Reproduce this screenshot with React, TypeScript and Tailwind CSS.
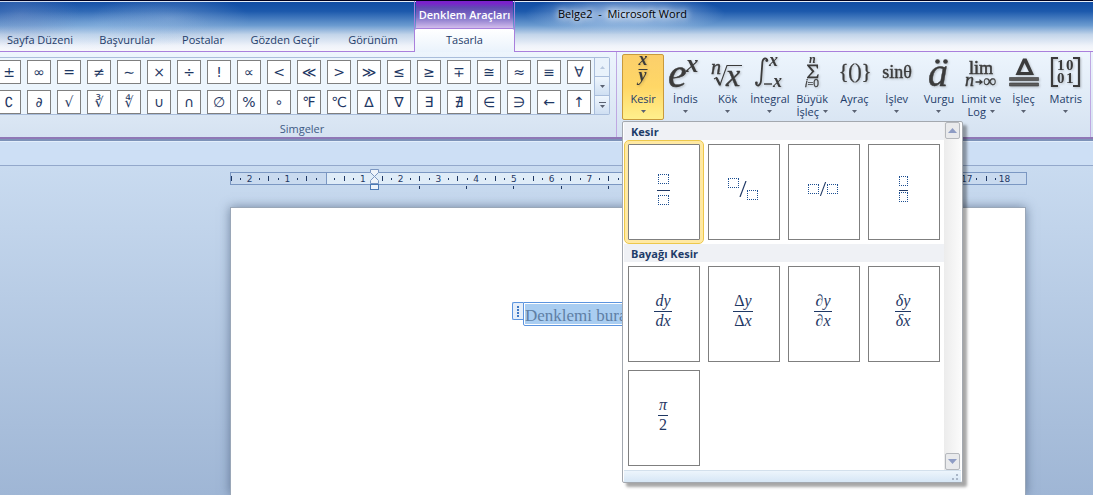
import type { ReactNode } from 'react';

const tabs = [
    { name: 'Sayfa Düzeni', width: 'w-20' },
    { name: 'Başvurular', width: 'w-[94px]' },
    { name: 'Postalar', width: 'w-[58px]' },
    { name: 'Gözden Geçir', width: 'w-[106px]' },
    { name: 'Görünüm', width: 'w-[70px]' },
];

const symbols = [
    ['±', '∞', '=', '≠', '∼', '×', '÷', '!', '∝', '<', '≪', '>', '≫', '≤', '≥', '∓', '≅', '≈', '≡', '∀'],
    ['∁', '∂', '√', '∛', '∜', '∪', '∩', '∅', '%', '∘', '℉', '℃', '∆', '∇', '∃', '∄', '∈', '∋', '←', '↑'],
];

const serif = 'Liberation Serif, DejaVu Serif, serif';

function Icon({ children }: { children: ReactNode }) {
    return (
        <svg viewBox="0 0 42 34" className="h-[34px] w-[42px] shrink-0 overflow-visible drop-shadow-[1px_1px_1px_rgba(0,0,0,0.2)]" fill="#3b3b3b" stroke="none" fontFamily={serif} aria-hidden="true">
            {children}
        </svg>
    );
}

const structures = [
    {
        label: ['İndis'],
        icon: (
            <Icon>
                <text x="4" y="32" fontSize="42" fontStyle="italic" stroke="#3b3b3b" strokeWidth="0.5">e</text>
                <text x="22" y="17" fontSize="25" fontStyle="italic" fontWeight="bold">x</text>
            </Icon>
        ),
    },
    {
        label: ['Kök'],
        icon: (
            <Icon>
                <text x="4" y="19" fontSize="20" fontStyle="italic" stroke="#3b3b3b" strokeWidth="0.4">n</text>
                <path d="M7 24l2.500-1.500L13 30l7-19.500h15" fill="none" stroke="#3b3b3b" strokeWidth="1.1" />
                <path d="M9.500 23l3.500 7" fill="none" stroke="#3b3b3b" strokeWidth="2.2" />
                <text x="19" y="31" fontSize="32" fontStyle="italic" stroke="#3b3b3b" strokeWidth="0.4">x</text>
            </Icon>
        ),
    },
    {
        label: ['İntegral'],
        icon: (
            <Icon>
                <path d="M18 5c0-2.500-4-2.500-4.600 2L12 26c-.5 5-4 5.500-5 3" fill="none" stroke="#3b3b3b" strokeWidth="1.8" />
                <circle cx="17.800" cy="5.500" r="1.400" />
                <circle cx="7.400" cy="28" r="1.400" />
                <text x="20" y="11" fontSize="18" fontStyle="italic" fontWeight="bold">x</text>
                <path d="M15 29h8" stroke="#3b3b3b" strokeWidth="1.400" />
                <text x="24" y="32" fontSize="18" fontStyle="italic" fontWeight="bold">x</text>
            </Icon>
        ),
    },
    {
        label: ['Büyük', 'İşleç'],
        icon: (
            <Icon>
                <text x="18" y="8" fontSize="12" fontStyle="italic" fontWeight="bold">n</text>
                <path d="M16 9.500h11v4h-1l-.8-2.300H19l4.500 5-5 5.300h7l1.200-2.300h1l-.6 4H16v-1l5-5.700-5-6z" />
                <text x="14" y="32" fontSize="10" fontFamily="Open Sans, sans-serif" stroke="#3b3b3b" strokeWidth="0.3"><tspan fontStyle="italic">i</tspan>=0</text>
            </Icon>
        ),
    },
    {
        label: ['Ayraç'],
        icon: (
            <Icon>
                <text x="22" y="23" fontSize="20" textAnchor="middle" stroke="#3b3b3b" strokeWidth="0.3">{'{()}'}</text>
            </Icon>
        ),
    },
    {
        label: ['İşlev'],
        icon: (
            <Icon>
                <text x="21" y="23" fontSize="18" textAnchor="middle" stroke="#3b3b3b" strokeWidth="0.4">sinθ</text>
            </Icon>
        ),
    },
    {
        label: ['Vurgu'],
        icon: (
            <Icon>
                <text x="10" y="31" fontSize="40" fontStyle="italic" stroke="#3b3b3b" strokeWidth="0.4">a</text>
                <circle cx="19.500" cy="6.500" r="2.300" />
                <circle cx="27.500" cy="6.500" r="2.300" />
            </Icon>
        ),
    },
    {
        label: ['Limit ve', 'Log'],
        icon: (
            <Icon>
                <text x="21" y="19" fontSize="18" textAnchor="middle" stroke="#3b3b3b" strokeWidth="0.5">lim</text>
                <text x="5" y="31" fontSize="18" fontStyle="italic" stroke="#3b3b3b" strokeWidth="0.4">n</text>
                <path d="M15.500 26.200h4v-2.200l3.500 3-3.500 3v-2.200h-4z" />
                <text x="23" y="32" fontSize="18" stroke="#3b3b3b" strokeWidth="0.3">∞</text>
            </Icon>
        ),
    },
    {
        label: ['İşleç'],
        icon: (
            <Icon>
                <path fillRule="evenodd" d="M20 3.500h3.500L31 20H12.500zM21.500 8l-4 9h8.500z" />
                <path d="M6.500 22.500h29v3h-29zM6.500 28h29v3h-29z" fill="#5c5c5c" stroke="#3b3b3b" strokeWidth="0.6" />
            </Icon>
        ),
    },
    {
        label: ['Matris'],
        icon: (
            <Icon>
                <path d="M13 3H7v28h6M28 3h6v28h-6" fill="none" stroke="#3b3b3b" strokeWidth="2.200" />
                <text x="12" y="15" fontSize="15" fontWeight="bold">1</text>
                <text x="21" y="15" fontSize="15" fontWeight="bold">0</text>
                <text x="12" y="28" fontSize="15" fontWeight="bold">0</text>
                <text x="21" y="28" fontSize="15" fontWeight="bold">1</text>
            </Icon>
        ),
    },
];

const commonFractions = [
    { prefix: 'd', upright: false },
    { prefix: 'Δ', upright: true },
    { prefix: '∂', upright: false },
    { prefix: 'δ', upright: false },
];

function Caret() {
    return (
        <svg viewBox="0 0 5 3" className="h-[3px] w-[5px] shrink-0" fill="#5a6272" aria-hidden="true">
            <path d="M0 0h5L2.500 3z" />
        </svg>
    );
}

function StructureButton({ label, icon }: { label: string[]; icon: ReactNode }) {
    return (
        <button className="flex h-[66px] w-full flex-col items-center border border-transparent">
            {icon}
            <span className="mt-[3px] text-[11px] leading-[13px] whitespace-nowrap">{label[0]}</span>
            <span className="flex h-[13px] items-center gap-1 text-[11px] leading-[13px]">
                {label[1]}
                <Caret />
            </span>
        </button>
    );
}

function Slot({ small = false }: { small?: boolean }) {
    return <span className={`block h-[10px] border border-dotted border-[#1d4f91] ${small ? 'w-[9px]' : 'w-[11px]'}`} />;
}

function Slash({ tall = false }: { tall?: boolean }) {
    return (
        <svg viewBox="0 0 8 16" className={tall ? 'h-4 w-2' : 'h-[14px] w-2'} aria-hidden="true">
            <path d="M7 0L1 16" stroke="#1f3864" strokeWidth="1.200" />
        </svg>
    );
}

function Tile({ label, active = false, children }: { label: string; active?: boolean; children: ReactNode }) {
    return (
        <button
            aria-label={label}
            className={`flex h-24 w-[72px] flex-col items-center justify-center border border-[#7f7f7f] bg-white pr-0.5 pb-1.5 text-[#1f3864] ${active ? 'rounded-[1px] ring-[3px] ring-[#ffe9a3] outline outline-offset-[3px] outline-[#edc84b]' : ''}`}
        >
            {children}
        </button>
    );
}

function Fraction({ top, bottom }: { top: ReactNode; bottom: ReactNode }) {
    return (
        <span className="flex flex-col font-['Liberation_Serif','DejaVu_Serif',serif] text-base leading-[18px]">
            <span className="border-b border-[#1f3864] px-px pb-px text-center">{top}</span>
            <span className="text-center">{bottom}</span>
        </span>
    );
}

function FractionMenu() {
    return (
        <div className="absolute top-full left-0 z-10 mt-px w-[341px] rounded-xs border border-[#a3a8af] bg-white px-px shadow-[4px_4px_3px_rgba(0,0,0,0.35)]">
            <div className="flex">
                <div className="flex-1 pb-1">
                    <h3 className="h-[18px] bg-[#eff1f5] pl-[7px] text-[11px] leading-5 font-bold">Kesir</h3>
                    <div className="grid grid-cols-4 gap-2 px-1 py-1">
                        <Tile label="Yığılmış kesir" active>
                            <Slot />
                            <span className="mt-1.5 mb-1 h-px w-[13px] bg-[#1f3864]" />
                            <Slot />
                        </Tile>
                        <Tile label="Eğik kesir">
                            <span className="flex items-center">
                                <span className="pb-3"><Slot /></span>
                                <Slash tall />
                                <span className="pt-3"><Slot /></span>
                            </span>
                        </Tile>
                        <Tile label="Doğrusal kesir">
                            <span className="flex items-center">
                                <Slot />
                                <Slash />
                                <Slot />
                            </span>
                        </Tile>
                        <Tile label="Küçük kesir">
                            <Slot small />
                            <span className="mt-1 mb-px h-px w-[9px] bg-[#1f3864]" />
                            <Slot small />
                        </Tile>
                    </div>
                    <h3 className="h-[18px] bg-[#eff1f5] pl-[7px] text-[11px] leading-5 font-bold">Bayağı Kesir</h3>
                    <div className="grid grid-cols-4 gap-2 px-1 pt-1">
                        {commonFractions.map(({ prefix, upright }) => (
                            <Tile key={prefix} label={`${prefix}y / ${prefix}x`}>
                                <Fraction
                                    top={<><span className={upright ? '' : 'italic'}>{prefix}</span><i>y</i></>}
                                    bottom={<><span className={upright ? '' : 'italic'}>{prefix}</span><i>x</i></>}
                                />
                            </Tile>
                        ))}
                        <Tile label="π / 2">
                            <Fraction top={<i>π</i>} bottom="2" />
                        </Tile>
                    </div>
                </div>
                <div className="flex w-[17px] flex-col justify-between bg-gradient-to-r from-[#ececec] to-[#fbfbfb] px-px">
                    <button aria-label="Yukarı kaydır" className="flex h-[17px] items-center justify-center rounded-xs border border-[#b5b8bd] bg-[#e9eaec]">
                        <svg viewBox="0 0 9 5" className="h-[5px] w-[9px]" fill="#8e9cc4"><path d="M4.500 0L9 5H0z" /></svg>
                    </button>
                    <button aria-label="Aşağı kaydır" className="flex h-[17px] items-center justify-center rounded-xs border border-[#b5b8bd] bg-[#e9eaec]">
                        <svg viewBox="0 0 9 5" className="h-[5px] w-[9px]" fill="#8e9cc4"><path d="M0 0h9L4.500 5z" /></svg>
                    </button>
                </div>
            </div>
            <div className="flex h-3 items-end justify-end border-t border-[#d3e0ec] bg-gradient-to-b from-[#edf5fc] to-[#d6e6f5] pr-[3px] pb-0.5">
                <svg viewBox="0 0 6 6" className="h-[6px] w-[6px]" fill="#a9b6c8"><path d="M4 0h2v2H4zM4 4h2v2H4zM0 4h2v2H0z" /></svg>
            </div>
        </div>
    );
}

function Header() {
    return (
        <header className="flex h-[52px] border-t border-[#00001e] bg-[linear-gradient(#0f4ba3,#1c59ac_20%,#6b9bd0_48%,#c3d5ea_66%,#f0f3fa_88%,#f8f9fc)] shadow-[inset_0_1px_0_#e4ecf7]">
            <nav className="flex w-[414px] items-end border-b border-[#a97fdc] bg-[radial-gradient(ellipse_60px_34px_at_20px_14px,rgba(130,150,200,0.4),transparent),radial-gradient(ellipse_110px_26px_at_100px_24px,rgba(170,205,240,0.3),transparent),radial-gradient(ellipse_80px_26px_at_170px_18px,rgba(150,180,220,0.45),transparent)] pb-[3px]">
                {tabs.map(t => (
                    <button key={t.name} className={`${t.width} text-center text-[11px] leading-4 whitespace-nowrap`}>{t.name}</button>
                ))}
            </nav>
            <div className="flex w-[101px] shrink-0 flex-col border-x border-[#a97fdc]">
                <div className="mx-px h-[27px] bg-[linear-gradient(#7a22cc_8%,#6149b4_24%,#7f70c8_60%,#d3bdec)] text-center text-[11px] leading-[27px] font-semibold whitespace-nowrap text-white">Denklem Araçları</div>
                <button className="flex-1 rounded-t-xs border-t border-[#a97fdc] bg-gradient-to-b from-white to-[#eaf3fc] pb-px text-[11px]">Tasarla</button>
            </div>
            <div className="flex-1 border-b border-[#a97fdc] bg-[radial-gradient(ellipse_100px_20px_at_110px_13px,rgba(200,220,245,0.8),transparent)] pl-[43px]">
                <h1 className="text-[11px] leading-[26px] whitespace-pre text-black [text-shadow:0_0_6px_white,0_0_10px_white]">Belge2  -  Microsoft Word</h1>
            </div>
        </header>
    );
}

function SymbolGallery() {
    return (
        <section className="flex w-[617px] shrink-0 flex-col border-r border-[#bfa8e2] pt-[5px]">
            <div className="mr-1.5 flex h-[60px] rounded-r-xs border-y border-r border-[#a9bddb]">
                <div className="flex flex-1 flex-col gap-1.5 overflow-hidden bg-[#ecf5fd] pt-0.5">
                    {symbols.map((row, i) => (
                        <div key={i} className="-ml-[3px] flex gap-1.5">
                            {row.map(s => (
                                <button key={s} className="h-6 w-6 shrink-0 border border-[#7f7f7f] bg-white font-['DejaVu_Sans',sans-serif] text-sm leading-5 text-[#1f3864]">{s}</button>
                            ))}
                        </div>
                    ))}
                </div>
                <div className="flex w-[15px] flex-col border-l border-[#a9bddb]">
                    <button aria-label="Önceki satır" className="flex flex-1 items-center justify-center bg-[#e9f2fb]">
                        <svg viewBox="0 0 5 3" className="h-[3px] w-[5px]" fill="#b8c8de"><path d="M0 3h5L2.500 0z" /></svg>
                    </button>
                    <button aria-label="Sonraki satır" className="flex flex-1 items-center justify-center border-y border-[#a9bddb] bg-gradient-to-b from-[#eff6fd] to-[#cfdff2]"><Caret /></button>
                    <button aria-label="Diğer" className="flex flex-1 flex-col items-center justify-center gap-0.5 bg-gradient-to-b from-[#eff6fd] to-[#cfdff2]">
                        <span className="h-px w-[7px] bg-[#5a6272]" />
                        <Caret />
                    </button>
                </div>
            </div>
            <h2 className="pt-1 pr-3 text-center text-[11px] leading-5 text-[#3e5b85]">Simgeler</h2>
        </section>
    );
}

function Ruler() {
    // one centimetre on the ruler, zero sits where the left margin ends
    const cm = 37.75;
    const zero = 96;
    const quarters = Array.from({ length: 83 }, (_, i) => i - 10).filter(q => q % 4 !== 0);
    const numbers = [-2, -1, ...Array.from({ length: 18 }, (_, i) => i + 1)];
    return (
        <svg width="797" height="22" className="block" aria-label="Cetvel">
            <rect x="0.5" y="4.500" width="796" height="12" fill="#c9daef" stroke="#7b97c2" />
            <rect x="96.500" y="4.500" width="604" height="12" fill="#dfecf8" stroke="#7b97c2" />
            {quarters.map(q => {
                const x = Math.round(zero - 1 + (q * cm) / 4);
                return q % 2 === 0
                    ? <rect key={q} x={x} y="8" width="1" height="5" fill="#1f3864" />
                    : <rect key={q} x={x} y="10" width="1" height="2" fill="#1f3864" />;
            })}
            {numbers.map(n => (
                <text key={n} x={zero - 1 + n * cm} y="14" fontSize="9" textAnchor="middle" fill="#1f3864" fontFamily="DejaVu Sans, sans-serif">{Math.abs(n)}</text>
            ))}
            {Array.from({ length: 12 }, (_, i) => (
                <rect key={i} x={Math.round(189 + i * 47.2)} y="18" width="1" height="3" fill="#1f3864" />
            ))}
            <path d="M140.500 1.500h8v3l-4 4-4-4zM140.500 15.500v-3l4-4 4 4v3z" fill="#eef3fa" stroke="#7b97c2" />
            <rect x="140.500" y="16.500" width="8" height="5" fill="#eef3fa" stroke="#4d79b5" />
        </svg>
    );
}

export default function App() {
    return (
        <div className="flex min-h-screen flex-col overflow-hidden bg-[#c9dbf0] font-['Open_Sans','Noto_Sans',sans-serif] text-[#1e3c69]">
            <Header />

            <div className="flex h-[85px] bg-gradient-to-b from-[#edf5fd] to-[#d5e2f1]">
                <SymbolGallery />
                <section className="mr-0.5 flex min-w-0 flex-1 items-start border-r border-[#bfa8e2] pt-0.5 pr-[3px] pl-[5px]">
                    <div className="relative min-w-0 flex-1">
                        <button aria-expanded="true" className="flex h-[66px] w-full flex-col items-center rounded-xs border border-[#c89a3c] bg-gradient-to-b from-[#fbcf6b] via-[#ffd766] to-[#fff08c]">
                            <Icon>
                                <text x="21" y="10" fontSize="18" fontStyle="italic" fontWeight="bold" textAnchor="middle">x</text>
                                <path d="M16.500 14.500h9" stroke="#3b3b3b" />
                                <text x="20.500" y="26" fontSize="18" fontStyle="italic" fontWeight="bold" textAnchor="middle">y</text>
                            </Icon>
                            <span className="mt-[3px] text-[11px] leading-[13px]">Kesir</span>
                            <span className="flex h-[13px] items-center"><Caret /></span>
                        </button>
                        <FractionMenu />
                    </div>
                    {structures.map((s, i) => (
                        <div key={i} className="min-w-0 flex-1">
                            <StructureButton label={s.label} icon={s.icon} />
                        </div>
                    ))}
                </section>
            </div>
            <div className="h-[5px] border-t-2 border-b border-t-[#8f78b6] border-b-[#e3eefb] bg-[#7d92b8]" />
            <div className="h-6 border-b border-[#93a8cb] bg-[#cddff5]" />

            <main className="flex flex-1 flex-col bg-gradient-to-b from-[#c9dbf0] to-[#9fb6d5] pt-0.5 pl-[230px]">
                <Ruler />
                <div className="mt-[17px] w-[796px] flex-1 border border-b-0 border-[#9aa7b8] bg-white shadow-[0_0_10px_rgba(60,80,110,0.6)]">
                    <div className="mt-[94px] ml-[281px] flex">
                        <button aria-label="Denklemi taşı" className="flex h-[18px] w-[11px] items-center justify-center rounded-l-xs border border-r-0 border-[#5b94df] bg-[#e6effa]">
                            <svg viewBox="0 0 2 11" className="h-[11px] w-[2px]" fill="#3f78c4"><path d="M0 0h2v2H0zM0 3h2v2H0zM0 6h2v2H0zM0 9h2v2H0z" /></svg>
                        </button>
                        <div className="h-6 rounded-b-xs border border-[#5b94df] p-px">
                            <p className="h-5 bg-[#a9cdf1] pr-0.5 font-['Liberation_Serif',serif] text-[17px] leading-[23px] whitespace-nowrap text-[#5f7fa5]">Denklemi buraya yazın.</p>
                        </div>
                    </div>
                </div>
            </main>
        </div>
    );
}
